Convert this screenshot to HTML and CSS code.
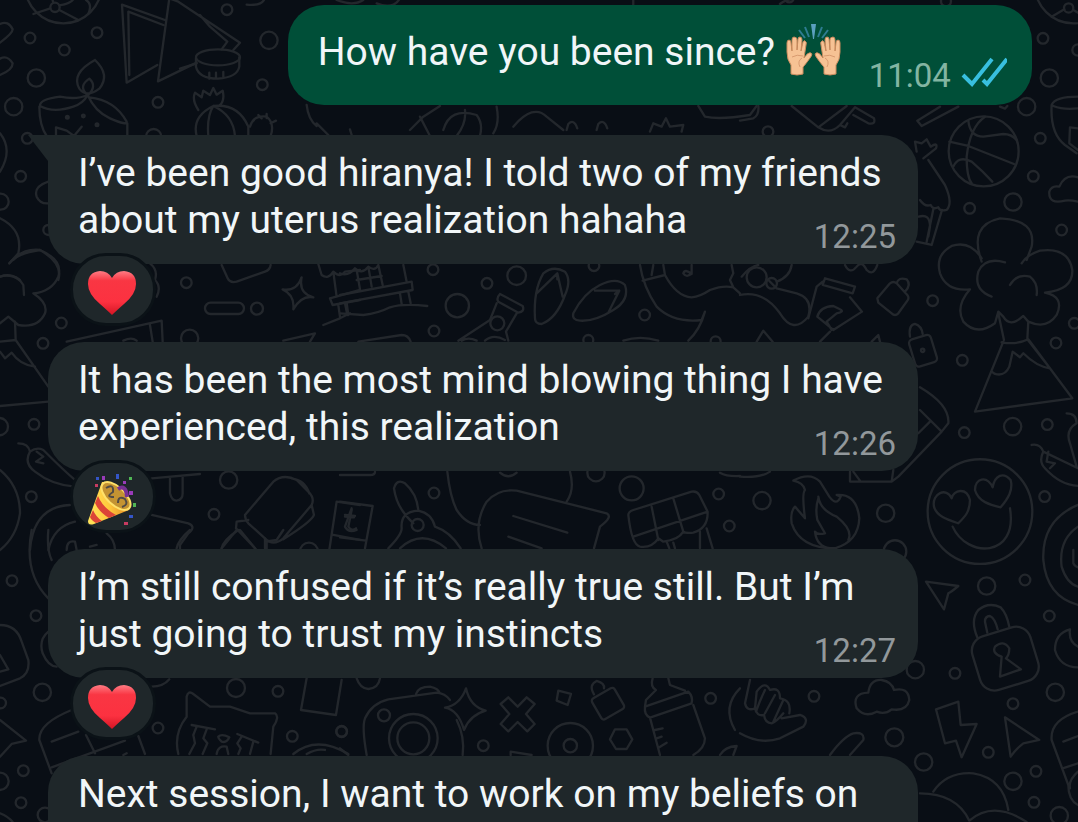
FILE: index.html
```
<!DOCTYPE html>
<html lang="en">
<head>
	<meta charset="utf-8">
	<title>Chat</title>
	<link rel="stylesheet" href="styles.css">
</head>
<body>
	<!-- doodle wallpaper -->
	<svg class="wallpaper" viewBox="0 0 1078 822" preserveAspectRatio="xMidYMin slice" aria-hidden="true">
		<g transform="scale(.3333)">
			<circle cx="190" cy="-45" r="115"/><circle cx="165" cy="22" r="14"/>
			<path d="M100 42L151 25M178 30L235 60M160 8L155 -10M178 16Q215 10 222 -5M258 0Q278 12 265 42"/>
			<circle cx="90" cy="114" r="16"/><circle cx="291" cy="98" r="16"/><circle cx="193" cy="150" r="16"/>
			<circle cx="109" cy="234" r="26"/><circle cx="41" cy="320" r="26"/><circle cx="681" cy="29" r="16"/>
			<circle cx="807" cy="121" r="26"/><circle cx="787" cy="254" r="16"/><circle cx="474" cy="307" r="16"/>
			<circle cx="82" cy="415" r="16"/><circle cx="62" cy="529" r="16"/><circle cx="2" cy="605" r="24"/>
			<circle cx="461" cy="410" r="23"/><circle cx="145" cy="690" r="15"/>
			<path d="M0 72Q25 60 38 88Q38 100 0 128M0 176Q22 164 38 190Q38 210 0 225"/>
			<path d="M495 60L366 14L380 248L472 195M490 75L385 35L388 225M508 -5L474 244L590 188M508 -5L535 5L720 128L700 150M600 45L630 80L682 125L665 148"/>
			<ellipse cx="654" cy="172" rx="66" ry="24"/>
			<path d="M588 175V200Q596 235 654 236Q712 232 718 200V172M628 218V236M648 218V236M670 216V234M590 190L540 206M740 14Q780 18 792 0"/>
			<path d="M285 180Q212 220 238 266Q260 295 298 266Q332 225 285 180M258 280Q236 258 268 236Q292 258 265 285M263 285Q230 300 180 290Q118 298 120 318Q160 340 220 320Q250 310 263 285Q285 335 330 355Q384 378 380 365Q345 300 268 292M118 320Q118 375 140 408M382 370V408"/>
			<circle cx="202" cy="352" r="4"/><circle cx="250" cy="348" r="4"/><circle cx="291" cy="374" r="4"/>
			<path d="M168 408V382L200 392L222 408L245 380M590 408Q575 350 640 318Q715 310 745 380V408M625 408Q620 350 640 318M640 318Q700 345 705 408M595 330Q575 300 585 278L605 292L610 272L630 285L640 264L650 284L668 272Q675 300 660 315M750 380Q760 345 800 350Q825 370 812 408M775 345L785 355M800 342V354M812 370L828 362"/>
			<path d="M920 315Q925 360 950 378V370L985 405M1050 388L1056 408M0 400Q40 450 0 515M145 545Q100 560 110 590Q120 612 145 610"/>
			<path d="M0 655Q70 690 55 760L28 790M40 780Q70 745 120 750Q190 790 175 840M0 830Q30 820 60 840"/>
			<path d="M1230 390L1270 350L1320 318M1260 350L1290 408M1330 390Q1350 320 1430 345Q1450 370 1440 408M1395 330Q1400 370 1370 408M1490 320Q1500 370 1480 400M1540 380Q1600 310 1640 350L1690 390M1700 390L1705 372Q1722 355 1732 385M1790 390L1795 372Q1812 355 1822 385M1950 395L1960 370L1985 380L1998 355L2010 380L2050 375L2045 395M2095 318L2115 350Q2160 360 2250 345L2270 318M1130 10Q1180 30 1200 -5M1010 0Q1060 20 1090 0M1900 14V0M2340 12Q2360 -5 2400 -5"/>
		</g>
		<g transform="translate(740 0) scale(.3333)">
			<circle cx="1000" cy="-45" r="115"/><circle cx="986" cy="24" r="14"/>
			<path d="M935 50L973 28M1000 30L1014 38"/>
			<circle cx="909" cy="115" r="16"/><circle cx="1014" cy="150" r="17"/><circle cx="928" cy="234" r="26"/>
			<circle cx="860" cy="320" r="26"/><circle cx="901" cy="415" r="16"/><circle cx="880" cy="529" r="16"/>
			<circle cx="819" cy="606" r="26"/><circle cx="689" cy="625" r="16"/><circle cx="965" cy="690" r="16"/>
			<circle cx="84" cy="395" r="16"/><circle cx="618" cy="4" r="15"/><circle cx="148" cy="-6" r="13"/>
			<!-- basketball -->
			<circle cx="731" cy="454" r="105"/>
			<path d="M628 425L685 438L822 492M735 350Q690 380 680 470Q680 530 695 550M685 362Q690 410 730 410L790 402Q815 402 830 420M640 500Q655 465 695 485Q730 515 757 545"/>
			<path d="M1014 290Q945 290 935 315Q930 400 975 435L1010 460M940 318Q970 330 1014 325M1014 385L990 382L988 430L1014 450"/>
			<path d="M155 318L235 382L320 318M235 382Q270 405 300 375L345 322L402 355Q408 375 385 370L340 345M300 375L315 382L322 370M532 362L600 320M545 378L655 320M532 362L545 378M0 362L40 355Q58 345 55 318M780 320L795 326L802 318"/>
			<path d="M565 480L615 555Q640 610 620 630Q600 635 595 622Q580 630 572 615Q555 622 540 600M530 455L525 425L545 430L560 418L572 440Q595 425 588 445L550 475M606 630L575 735L530 725M580 628L560 725M536 650Q570 640 570 680L565 710"/>
			<path d="M1014 605Q990 600 975 602Q925 615 928 575Q935 555 958 560Q975 520 1014 532"/>
			<!-- volcano -->
			<path d="M725 775Q690 720 635 738Q585 765 600 820Q620 875 690 868Q645 920 670 965Q710 1010 765 970L775 935L790 950Q810 985 850 948L865 965Q920 990 950 945Q975 890 915 878Q1000 870 997 810Q985 740 900 752Q860 765 845 790M725 785Q685 675 780 655Q890 660 875 740L860 780M755 890Q700 870 715 815Q735 770 795 787M810 855Q830 820 870 830Q895 850 890 885M775 940L792 1020M865 965L862 1018M785 1027Q830 1035 865 1018L997 1195L705 1235L790 1025M862 1018L930 1105Q890 1100 850 1060L840 1072L818 1055L808 1100Q795 1130 765 1122L755 1115"/>
			<path d="M0 885Q70 870 120 940Q160 1005 205 950Q220 895 170 880L110 865L85 840M315 795Q330 825 350 800Q365 780 380 810Q400 830 412 795M155 795Q150 830 110 845M5 830Q30 800 55 795"/>
			<circle cx="50" cy="832" r="30"/><circle cx="95" cy="850" r="16"/>
			<path d="M255 835L345 860L338 880L248 855ZM248 845L230 860L205 955M330 892L366 935L280 990L232 950Q240 920 280 918L300 928Q315 935 290 940L260 965L275 990M240 1025L270 995M50 1025L70 992L98 1025M395 1025L415 1005L420 1025"/>
			<path d="M412 895L450 850Q460 842 470 850L502 885Q510 895 500 905L475 940Q465 950 455 940L415 908ZM470 850Q475 830 500 838Q515 855 495 875"/>
			<rect x="515" y="1010" width="68" height="85" rx="12" transform="rotate(-17 549 1052)"/><circle cx="548" cy="1051" r="5"/>
			<path d="M510 1010Q505 975 525 972Q545 978 548 1002"/>
			<circle cx="578" cy="902" r="16"/><circle cx="1003" cy="970" r="16"/><circle cx="948" cy="1029" r="16"/>
			<circle cx="667" cy="1081" r="16"/><circle cx="818" cy="1280" r="26"/><circle cx="922" cy="1274" r="16"/>
			<circle cx="673" cy="1298" r="16"/><circle cx="66" cy="1502" r="26"/><circle cx="437" cy="1540" r="26"/>
			<circle cx="914" cy="1490" r="16"/><circle cx="465" cy="1655" r="34"/>
			<path d="M540 1162Q630 1215 625 1270L605 1295L475 1430L455 1445H330V1415M605 1295L540 1230M570 1265L535 1300M455 1445L460 1410M340 1415L362 1445M0 1430Q60 1435 90 1415"/>
			<!-- fire -->
			<path d="M160 1442Q210 1415 240 1445L268 1490Q290 1520 302 1490L290 1485Q350 1480 358 1555Q355 1625 285 1645Q180 1645 155 1570Q150 1535 165 1520L195 1555Q185 1480 195 1470Q190 1448 160 1442ZM235 1490Q240 1530 290 1550Q340 1590 325 1620M235 1495Q225 1525 232 1560L255 1600Q230 1605 225 1595Q230 1640 270 1645"/>
			<!-- heart eyes -->
			<circle cx="720" cy="1535" r="157"/>
			<path d="M635 1495C620 1460 575 1480 582 1520C590 1550 625 1560 655 1570C675 1550 690 1535 690 1500C680 1460 640 1470 635 1495ZM758 1462C740 1425 705 1435 705 1470C715 1505 750 1515 782 1522C805 1495 820 1470 812 1440C790 1415 765 1425 758 1462ZM638 1580C680 1675 835 1675 810 1525"/>
			<path d="M875 1335Q900 1330 910 1355L1014 1405M910 1355Q895 1385 915 1405Q960 1455 1014 1458M925 1355L920 1385L945 1390L930 1405M980 1240Q1010 1240 1010 1270Q975 1290 990 1330L1010 1400M1014 1515Q905 1560 910 1680Q920 1790 1014 1815M1014 1580Q955 1620 965 1700Q980 1750 1014 1760M1000 1650V1690Q1005 1700 1014 1702"/>
		</g>
		<g transform="translate(0 250) scale(.3333)">
			<circle cx="559" cy="98" r="16"/><rect x="615" y="158" width="117" height="34" rx="17"/><circle cx="771" cy="176" r="18"/>
			<circle cx="184" cy="219" r="16"/><circle cx="129" cy="280" r="16"/><circle cx="102" cy="523" r="16"/>
			<circle cx="-2" cy="530" r="26"/><circle cx="569" cy="265" r="26"/><circle cx="686" cy="690" r="26"/>
			<circle cx="642" cy="793" r="16"/><circle cx="94" cy="740" r="16"/><circle cx="927" cy="905" r="27"/>
			<path d="M28 40Q50 10 120 0Q190 30 175 80Q155 125 100 130Q145 160 135 190Q115 235 55 225L25 200L0 220M0 80Q45 65 70 105L72 135M45 215L47 270L145 410M0 275L47 270M0 305L15 325L35 308Q60 345 105 350M0 468L145 455"/>
			<path d="M450 40Q475 60 465 90Q485 110 470 140M665 45L683 85Q690 100 710 95L795 65Q810 60 812 45M905 82Q895 130 940 142Q905 135 880 178Q885 135 848 118Q890 125 905 82ZM200 275L485 212L488 275M450 225L458 275M850 272L945 250L930 275M370 272Q395 260 410 272"/>
			<path d="M55 580Q85 580 90 605Q70 640 105 665Q155 705 225 710M90 605Q110 590 130 600Q190 660 225 690M110 605L130 620L108 635L130 640M0 660Q60 710 60 790Q50 860 0 900M90 900Q100 770 210 765M145 900Q160 830 225 815M200 900Q200 870 225 875L230 900M270 890L290 885M455 795L565 820Q590 830 565 850L540 885V900M320 850Q345 870 345 900M455 685L600 672M510 682V730Q515 752 530 752Q548 750 548 730V682"/>
			<path d="M735 795L820 695Q850 670 890 690L925 725Q945 745 935 765L850 865Q820 890 795 865L745 820Q735 808 735 795M745 810L710 815L708 835L770 900M875 685Q915 690 928 730M935 765L942 795Q935 815 850 868M710 840L665 895M800 870V900"/>
			<path d="M1080 765L1010 755L988 900M1000 855L1080 870M1055 775L1035 830Q1045 850 1070 840M1035 795L1065 798"/>
			<path d="M955 42L965 75Q985 90 1000 65Q1020 85 1035 65L1080 60M1000 65L1010 140M990 145L1080 120M990 145L998 165L1080 150M1015 165L1020 200M1040 158L1045 195M970 225L1020 205L1050 190"/>
		</g>
		<g transform="translate(340 250) scale(.3333)">
			<circle cx="279" cy="59" r="16"/><circle cx="441" cy="100" r="16"/><circle cx="530" cy="77" r="28"/>
			<circle cx="352" cy="167" r="35"/><circle cx="282" cy="243" r="16"/><circle cx="472" cy="220" r="21"/>
			<circle cx="762" cy="47" r="16"/><circle cx="914" cy="195" r="16"/><circle cx="745" cy="270" r="15"/><circle cx="1127" cy="274" r="15"/>
			<path d="M0 135L215 95L218 120L0 160M190 45L200 95M50 60L60 118M85 50L95 110M115 45L128 105M0 70Q25 80 45 55Q65 75 85 50Q105 65 115 45M50 90L125 78M180 130L185 162M205 125L212 160M15 160L22 195M0 190L70 195Q115 190 150 172Q190 160 262 168M55 275L185 255Q205 255 212 275"/>
			<path d="M480 132L548 168Q555 185 535 188L475 155Q468 145 480 132M470 160L450 210L355 272M530 190L498 245L505 272M365 272Q385 260 410 272M435 272Q460 250 495 270"/>
			<path d="M585 205Q580 120 610 70Q640 45 675 65Q695 90 675 135Q650 205 605 222Q585 222 585 205M590 130L652 70L668 140M652 70V88M700 190Q730 130 780 105Q830 80 855 105Q870 150 820 180Q765 215 720 212Q695 210 700 190M765 122H838L805 188M838 122L825 132"/>
			<path d="M900 45Q910 110 950 170Q1000 220 1085 210M908 92L975 75L970 45M975 75Q1010 140 1055 142Q1080 140 1110 120Q1150 105 1180 112L1200 130M1085 210L1095 185Q1080 240 1045 272M1055 45V70Q1040 85 1030 70Q1035 55 1055 72M935 75L940 45M1175 45L1180 70L1170 90L1180 112M850 272Q900 255 955 272"/>
		</g>
		<g transform="translate(340 460) scale(.3333)">
			<circle cx="282" cy="99" r="16"/><circle cx="768" cy="38" r="26"/><circle cx="875" cy="85" r="36"/>
			<circle cx="1136" cy="102" r="16"/><circle cx="1168" cy="198" r="16"/><circle cx="233" cy="195" r="18"/>
			<path d="M0 125L98 138L75 265M0 232L78 242M35 150L25 200Q35 215 48 205M15 170L42 172M0 45H90Q105 45 105 35"/>
			<path d="M220 190Q170 145 162 85Q170 55 195 70Q230 100 235 150M185 205Q180 155 235 152Q275 160 285 200Q330 215 362 265M185 205Q185 225 145 265M180 265Q245 205 318 265"/>
			<path d="M322 35Q330 110 350 150Q380 195 420 195M425 265Q400 190 440 125Q475 85 530 92L800 160Q820 170 780 200L762 265M520 168L682 218M505 230L605 265M690 35Q705 90 680 125M480 38Q505 60 530 38"/>
			<path d="M865 165Q865 155 880 150L1055 95Q1070 92 1078 105L1103 155Q1105 205 1060 218Q1035 220 1030 215Q1015 240 970 245L955 235Q935 265 900 260Q875 255 865 165M880 230L1103 155M935 140L955 240M1000 115L1030 215M1080 215V265M1100 205L1118 265M980 245L988 265M1000 248L1005 265M1140 38Q1160 50 1200 48"/>
		</g>
		<g transform="translate(0 530) scale(.3333)">
			<circle cx="36" cy="152" r="16"/><circle cx="108" cy="257" r="16"/><circle cx="127" cy="487" r="26"/>
			<circle cx="2" cy="519" r="16"/><circle cx="708" cy="474" r="27"/><circle cx="834" cy="484" r="16"/>
			<circle cx="474" cy="594" r="16"/><circle cx="877" cy="619" r="16"/><circle cx="1025" cy="605" r="16"/>
			<circle cx="70" cy="722" r="16"/><circle cx="0" cy="754" r="26"/><circle cx="63" cy="818" r="16"/><circle cx="135" cy="855" r="22"/>
			<path d="M95 0Q70 130 145 205M145 0Q140 60 155 90M0 285Q50 285 65 335L85 390Q90 430 60 445L0 468M0 375L25 418L0 425M145 305Q115 330 128 370Q145 410 170 410M0 570L78 632L35 642L0 680M0 850Q25 860 38 876M455 470Q490 470 508 448"/>
			<path d="M155 730L118 630Q115 580 215 540M155 635L235 605M155 712L375 632M258 615L285 670M415 618L435 672M370 675L380 670"/>
			<path d="M535 672Q520 610 560 560V500Q565 480 580 492L630 530L690 530L750 550L825 550Q840 560 820 590L812 672M575 585L645 598M590 590L580 615L585 640L568 672M620 598L610 625L622 640L608 672M655 620Q665 610 688 622Q680 640 665 635Q655 625 655 620M650 672Q655 645 680 650L685 672M712 612L775 638M725 620L712 640L722 655L715 672M760 635L750 672M880 672Q950 615 1045 672M920 672Q950 655 975 660"/>
			<path d="M920 445L903 540L1008 555L1025 450M530 55Q535 30 570 0M665 55Q670 30 715 0M720 0L765 55M795 25V55M795 35L830 30L850 0"/>
		</g>
		<g transform="translate(340 660) scale(.3333)">
			<circle cx="132" cy="166" r="18"/><circle cx="5" cy="214" r="16"/><circle cx="430" cy="257" r="16"/>
			<circle cx="220" cy="235" r="73"/><circle cx="220" cy="235" r="48"/><circle cx="691" cy="257" r="68"/><circle cx="691" cy="257" r="20"/>
			<circle cx="1112" cy="115" r="16"/>
			<path d="M80 285Q65 200 75 175Q95 130 145 118L290 98Q315 100 330 120M228 102Q235 80 270 80Q295 85 300 100M350 180Q375 230 368 285M50 55Q60 85 85 87Q115 85 120 55M0 265L25 285"/>
			<path d="M378 85Q390 140 437 152Q390 165 372 210Q355 150 315 143Q360 135 378 85ZM533 140L560 112L584 132L558 162L584 192L562 214L533 186L505 214L482 192L508 162L482 132L505 112ZM655 92L693 102L683 135L650 122ZM825 208H860L877 238L860 267H828L810 238Z"/>
			<rect x="765" y="95" width="78" height="72" rx="9" transform="rotate(-30 804 131)"/>
			<path d="M762 103Q745 75 770 63Q795 70 792 85M512 285V275L575 285"/>
			<path d="M938 55Q930 80 948 90L918 120L915 140M985 55L990 75L1035 92M915 140L1045 95Q1060 110 1055 130L930 173Q912 165 915 140M930 173L960 285M1060 135L1095 235Q1095 265 1060 285M945 210L968 205M950 235L965 230M958 262L980 248M1200 85Q1145 140 1185 210M1140 285Q1155 260 1190 258L1180 285"/>
		</g>
		<g transform="translate(740 530) scale(.3333)">
			<circle cx="740" cy="168" r="26"/><circle cx="855" cy="150" r="16"/><circle cx="928" cy="258" r="16"/>
			<circle cx="645" cy="430" r="16"/><circle cx="526" cy="419" r="26"/><circle cx="819" cy="521" r="16"/>
			<circle cx="946" cy="487" r="26"/><circle cx="222" cy="499" r="16"/><circle cx="463" cy="622" r="27"/>
			<circle cx="551" cy="696" r="26"/><circle cx="745" cy="667" r="16"/><circle cx="888" cy="724" r="16"/>
			<circle cx="819" cy="754" r="26"/><circle cx="882" cy="817" r="16"/><circle cx="958" cy="857" r="26"/>
			<path d="M558 155L655 168Q635 185 625 190L612 238ZM795 562L898 630L850 640Q830 655 812 680ZM588 538L655 515L662 585L710 582L665 682L648 632L615 640Z"/>
			<!-- padlock -->
			<rect x="705" y="302" width="182" height="168" rx="45" transform="rotate(-17 796 386)"/>
			<path d="M712 322Q690 270 715 240Q745 215 782 232Q800 250 808 290M742 308L735 275Q735 258 750 258Q765 265 773 298M780 440L785 380Q755 370 765 350Q790 328 808 355Q808 375 798 385L843 418Z"/>
			<!-- cloud -->
			<path d="M385 488Q390 448 425 450Q455 455 462 480Q505 470 508 510Q500 545 455 538Q435 555 410 545Q375 565 350 535Q335 490 385 488Z"/>
			<path d="M990 298Q945 310 945 360Q960 412 1014 412M990 298Q985 335 1014 350M1014 545Q930 570 935 630L985 765Q985 810 1014 825M970 635L1014 618M968 715L1014 700M1014 725Q985 750 990 775"/>
			<path d="M30 450L15 520Q20 545 45 535M45 535L50 485Q75 450 90 480Q120 470 120 505Q155 510 148 550M45 535Q50 560 72 555Q75 580 95 580Q110 575 130 550M75 480Q60 510 48 545M105 495L75 550M130 510L100 575M125 565L180 555Q210 565 190 590L120 625Q60 645 0 610M270 675Q310 620 340 610Q375 605 370 630L330 675"/>
			<path d="M580 785Q620 725 700 730Q790 745 805 840M540 790Q650 790 688 872M688 872Q760 810 860 876"/>
		</g>
	</svg>

	<!-- shared emoji shapes -->
	<svg class="defs" width="0" height="0" aria-hidden="true">
		<defs>
			<linearGradient id="red" x1="0" y1="0" x2="0" y2="1">
				<stop offset="0" stop-color="#ff7c84"/><stop offset=".22" stop-color="#f93643"/>
				<stop offset=".7" stop-color="#fc3140"/><stop offset="1" stop-color="#d41524"/>
			</linearGradient>
			<linearGradient id="cone" x1="0" y1="0" x2="1" y2="0">
				<stop offset="0" stop-color="#ffe45b"/><stop offset=".5" stop-color="#ffc83c"/><stop offset="1" stop-color="#e38a22"/>
			</linearGradient>
			<symbol id="heart" viewBox="0 0 50 46">
				<path fill="url(#red)" d="M25 45Q21 41 13 34Q1 24 1 14Q1 2 13 1Q21 1 25 8Q29 1 37 1Q49 2 49 14Q49 24 37 34Q29 41 25 45Z"/>
			</symbol>
			<symbol id="hand" viewBox="0 0 28 40">
				<path fill="#f6c294" stroke="#c98a5d" stroke-width="1" stroke-linejoin="round" d="M6 38V29Q2 24 2 16V7Q2 4 4 4Q6 4 6 7L7 15V4Q7 1 9 1Q12 1 12 4V14L13 3Q13 1 15 1Q17 1 17 4L16 15L18 6Q19 4 20 5Q22 6 21 9L19 22Q23 16 26 17Q28 18 25 22Q20 29 18 31V38Q12 40 6 38Z"/>
				<path fill="none" stroke="#d99b70" stroke-width="1" d="M7 21Q12 18 18 20M15 31Q12 25 17 22"/>
			</symbol>
		</defs>
	</svg>

	<main class="chat">
		<div class="bubble out">
			<p class="text">How have you been since?
				<svg class="hands" viewBox="0 0 58 54" role="img" aria-label="Raised hands">
					<path d="M26 1H31L29 16H28Z" fill="#5ba0bf"/>
					<path d="M20 4L24 14M37 4L33 14M14 7L20 15M43 7L37 15" stroke="#2d7c91" stroke-width="2" fill="none"/>
					<use href="#hand" x="0" y="13" width="28" height="40"/>
					<use href="#hand" x="0" y="13" width="28" height="40" transform="matrix(-1 0 0 1 57 0)"/>
				</svg>
			</p>
			<span class="time">11:04
				<svg class="ticks" viewBox="0 0 46 30" role="img" aria-label="Read">
					<path d="M2 18L11 27L31 2M22 23L26 27L46 2" fill="none" stroke="#38bfdf" stroke-width="4"/>
				</svg>
			</span>
		</div>

		<div class="message">
			<div class="bubble in tail">
				<p class="text">I’ve been good hiranya! I told two of my friends about my uterus realization hahaha</p>
				<span class="time">12:25</span>
			</div>
			<button class="reaction" type="button" aria-label="Heart reaction">
				<svg class="heart"><use href="#heart"/></svg>
			</button>
		</div>

		<div class="message">
			<div class="bubble in">
				<p class="text">It has been the most mind blowing thing I have experienced, this realization</p>
				<span class="time">12:26</span>
			</div>
			<button class="reaction" type="button" aria-label="Party reaction">
				<svg class="popper" viewBox="0 0 50 52">
					<path fill="url(#cone)" d="M15 8L1 47Q1 52 7 50L42 36Q46 30 36 19Q24 7 15 8Z"/>
					<path fill="#dc4437" d="M11 22Q16 34 29 41L22 44Q12 38 8 29ZM6 36Q9 43 15 47L9 49Q4 46 3 43Z"/>
					<ellipse cx="29" cy="22" rx="18" ry="9" transform="rotate(43 29 22)" fill="#c49332" stroke="#ffe16a" stroke-width="2"/>
					<path d="M19 14Q27 9 26 18Q18 23 27 23M31 29Q31 21 38 25Q42 31 35 33" fill="none" stroke="#514b45" stroke-width="2"/>
					<path d="M31 15Q39 10 40 23" fill="none" stroke="#783093" stroke-width="4"/>
					<path fill="#3455c7" d="M9 3H12V6H9ZM29 0H32V5H29ZM42 41H46V44H42Z"/>
					<path fill="#993bb9" d="M15 2H18V6H15ZM36 7H39V10H36ZM42 17H46V21H42Z"/>
					<path fill="#50b755" d="M42 3H45V6H42ZM46 29H49V33H46Z"/>
					<path fill="#c73b61" d="M8 10H11V13H8ZM37 48H41V51H37Z"/>
				</svg>
			</button>
		</div>

		<div class="message">
			<div class="bubble in">
				<p class="text">I’m still confused if it’s really true still. But I’m just going to trust my instincts</p>
				<span class="time">12:27</span>
			</div>
			<button class="reaction" type="button" aria-label="Heart reaction">
				<svg class="heart"><use href="#heart"/></svg>
			</button>
		</div>

		<div class="message last">
			<div class="bubble in">
				<p class="text">Next session, I want to work on my beliefs on</p>
			</div>
		</div>
	</main>
</body>
</html>
```
FILE: styles.css
```
*{
	box-sizing:border-box;
}

body{
	margin:0;
	background-color:#090e15;
	font-family:Roboto, "Liberation Sans", sans-serif;
	color:#f1f6f8;
}

p{
	margin:0;
}

.wallpaper{
	position:absolute;
	width:100%;
	height:100%;
	z-index:-1;
	fill:none;
	stroke:#23272c;
	stroke-width:7;
	stroke-linecap:round;
	stroke-linejoin:round;
}

.defs{
	position:absolute;
}

.chat{
	display:flex;
	flex-direction:column;
	min-height:100vh;
	padding:5px 46px 0 48px;
}

.bubble{
	display:grid;
	border-radius:36px;
	font-size:39px;
	line-height:47px;
}

.out{
	grid-template-columns:auto auto;
	column-gap:26px;
	width:fit-content;
	margin:0 0 30px auto;
	padding:24px 25px 10px 30px;
	background-color:#004f38;
}

.out .text{
	margin-bottom:19px;
}

/* text and time share one cell, the time sits in its corner */
.in{
	min-height:129px;
	padding:15px 22px 8px 30px;
	background-color:#1f272a;
}

.in .text,
.in .time{
	grid-area:1 / 1;
}

.in .text{
	margin-bottom:12px;
}

.tail{
	position:relative;
	border-top-left-radius:0;
}

.tail::before{
	content:"";
	position:absolute;
	top:0;
	left:-20px;
	width:20px;
	height:26px;
	background-color:#1f272a;
	clip-path:polygon(0 0, 100% 0, 100% 100%);
}

.time{
	align-self:end;
	justify-self:end;
	font-size:33px;
	line-height:39px;
	color:#92989b;
}

.out .time{
	color:#83b5a2;
}

.message{
	margin-right:114px;
	margin-bottom:16px;
}

/* the newest message runs on under the bottom edge */
.last{
	display:flex;
	flex-grow:1;
	margin-bottom:0;
}

.last .bubble{
	flex-grow:1;
	min-height:0;
	padding-bottom:0;
	border-bottom-left-radius:0;
	border-bottom-right-radius:0;
}

.last .text{
	margin-bottom:0;
}

.reaction{
	display:flex;
	align-items:center;
	justify-content:center;
	position:relative;
	width:86px;
	height:73px;
	margin:-11px 0 0 22px;
	padding:6px 2px 0 0;
	border:3px solid #0b1217;
	border-radius:36px;
	background-color:#1f272a;
}

.heart{
	width:50px;
	height:46px;
}

.popper{
	width:50px;
	height:52px;
}

.hands{
	width:58px;
	height:54px;
	margin:-16px 0 -10px;
	vertical-align:-2px;
}

.ticks{
	width:46px;
	height:30px;
	margin-left:2px;
}
```
